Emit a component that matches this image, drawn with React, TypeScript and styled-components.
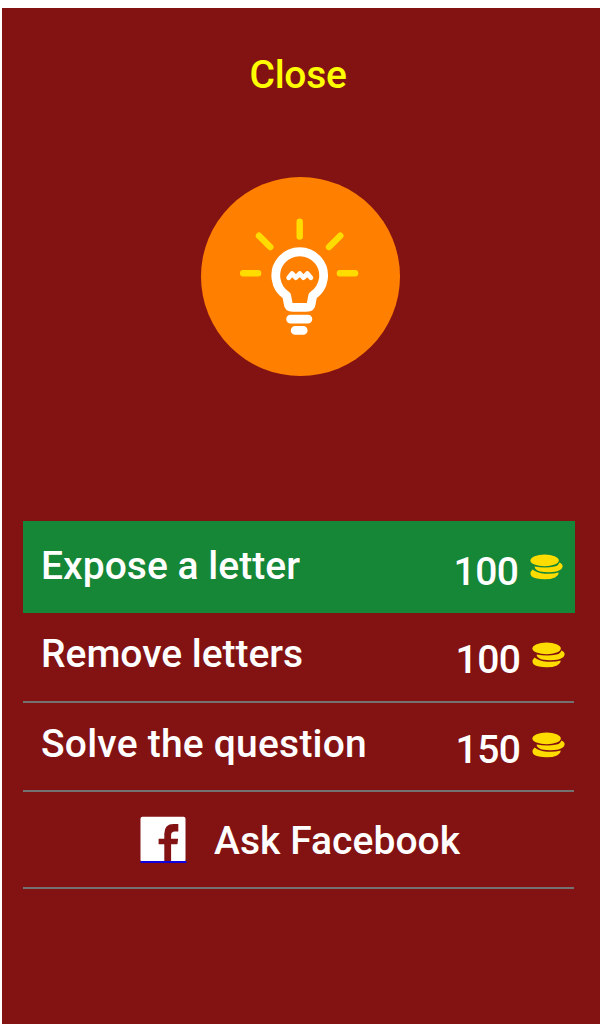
import React from "react";
import styled, { createGlobalStyle } from "styled-components";

const GlobalStyle = createGlobalStyle`
  * { box-sizing: border-box; }
  body { margin: 0; background: #fff; overflow: hidden; }
`;

const Screen = styled.main`
  height: 1024px;
  padding: 8px 0 0 2px;
  background: #fff;
  font-family: Roboto, "Liberation Sans", sans-serif;
  font-size: 39px;
  font-weight: 500;
  line-height: 40px;
  color: #fff;
`;

const Panel = styled.section`
  height: 100%;
  display: flex;
  flex-direction: column;
  align-items: stretch;
  background: #831313;
`;

const CloseButton = styled.button`
  align-self: center;
  margin: 47px 6px 0 0;
  padding: 0;
  border: 0;
  background: none;
  font: inherit;
  letter-spacing: -0.3px;
  color: #ffff00;
`;

const BulbBadge = styled.div`
  align-self: center;
  width: 199px;
  height: 199px;
  margin: 82px 2px 0 0;
  border-radius: 50%;
  background: #ff8000;

  svg { display: block; }
`;

const Options = styled.ul`
  list-style: none;
  margin: 145px 25px 0 21px;
  padding: 0;
`;

const Option = styled.li<{ $height: number; $active?: boolean; $top: number }>`
  display: flex;
  align-items: flex-start;
  justify-content: space-between;
  height: ${(p) => p.$height}px;
  margin-right: ${(p) => (p.$active ? 0 : 1)}px;
  padding: ${(p) => p.$top}px ${(p) => (p.$active ? 12 : 9)}px 0 18px;
  background: ${(p) => (p.$active ? "#168637" : "transparent")};
  border-bottom: ${(p) => (p.$active ? "0" : "2px solid #737171")};
`;

const Label = styled.span<{ $spacing: number }>`
  white-space: nowrap;
  letter-spacing: ${(p) => p.$spacing}px;
`;

const Price = styled.span`
  display: flex;
  align-items: flex-start;
  gap: 11.5px;
  padding-top: 6px;
  letter-spacing: -0.5px;

  svg { display: block; margin-top: 2px; }
`;

const ShareOption = styled(Option)`
  justify-content: flex-start;
  padding-left: 117px;
  gap: 27px;

  svg { display: block; margin-top: -5px; }
`;

const Bulb = () => (
  <svg width="199" height="199" viewBox="0.5 0 199 199" fill="none" strokeLinecap="round">
    <g stroke="#ffdc00" strokeWidth="6.4">
      <path d="M99.2 44.8v14.8M58.5 58.7l11.3 11.3M139.8 58.7l-11.3 11.3M42.7 96.3h14.9M139.4 96.3h15.2" />
    </g>
    <g stroke="#fff" strokeLinejoin="round">
      <path strokeWidth="8.8" d="M86.2 118.7A23.9 23.9 0 1 1 112.2 118.7L110.9 125.8Q110.5 130.4 106 130.4H92.4Q87.9 130.4 87.5 125.8Z" />
      <path strokeWidth="8.8" d="M90.1 142.1h17.3M94.7 153.4h8" />
      <path strokeWidth="4.8" d="M88.2 100.8l3.4-4.2 3.8 4 3.8-4 3.8 4 3.8-4 3.6 4.2" />
    </g>
  </svg>
);

const Coins = () => (
  <svg width="33" height="26" viewBox="0 0 33 26" fill="#ffdc00">
    <ellipse cx="14.6" cy="6.4" rx="14.2" ry="5.8" />
    <path d="M4.7 12.5Q15 14.6 24.5 12.6Q28.8 11.3 29.3 8.4Q32.9 9.6 32.6 12.6Q32 16.3 26.5 17.4Q18.5 19 10 17.4Q4.3 15.8 4.7 12.5Z" />
    <path d="M2.6 15.4Q6.5 18.8 15 19.7Q22.5 20.3 28.7 18.6Q28.6 21.7 25 23.4Q21 25.3 14.6 25.3Q5.8 25.2 1.8 22.6Q-1.2 19 2.6 15.4Z" />
  </svg>
);

const FacebookMark = () => (
  <svg width="47" height="47" viewBox="0 0 47 47">
    <rect x="0.5" y="0.7" width="45" height="45.3" rx="2" fill="#fff" />
    <path fill="#831313" d="M24.3 45.2V28.2H18.6v-5.5h5.7v-5Q24.3 8 33.5 8h4.8v7.5h-3.4q-3.8 0-3.8 3.6v3.6h7l-.7 5.5h-6.3V45.2Z" />
    <path fill="#1000e0" d="M0.5 45h46v2H.5z" />
  </svg>
);

export default function App() {
  return (
    <Screen>
      <GlobalStyle />
      <Panel>
        <CloseButton>Close</CloseButton>
        <BulbBadge><Bulb /></BulbBadge>
        <Options>
          <Option $active $height={92} $top={25}>
            <Label $spacing={0.03}>Expose a letter</Label>
            <Price>100<Coins /></Price>
          </Option>
          <Option $height={90} $top={21}>
            <Label $spacing={-0.03}>Remove letters</Label>
            <Price>100<Coins /></Price>
          </Option>
          <Option $height={89} $top={21}>
            <Label $spacing={0.22}>Solve the question</Label>
            <Price>150<Coins /></Price>
          </Option>
          <ShareOption $height={97} $top={29}>
            <FacebookMark />
            <Label $spacing={0.05}>Ask Facebook</Label>
          </ShareOption>
        </Options>
      </Panel>
    </Screen>
  );
}
